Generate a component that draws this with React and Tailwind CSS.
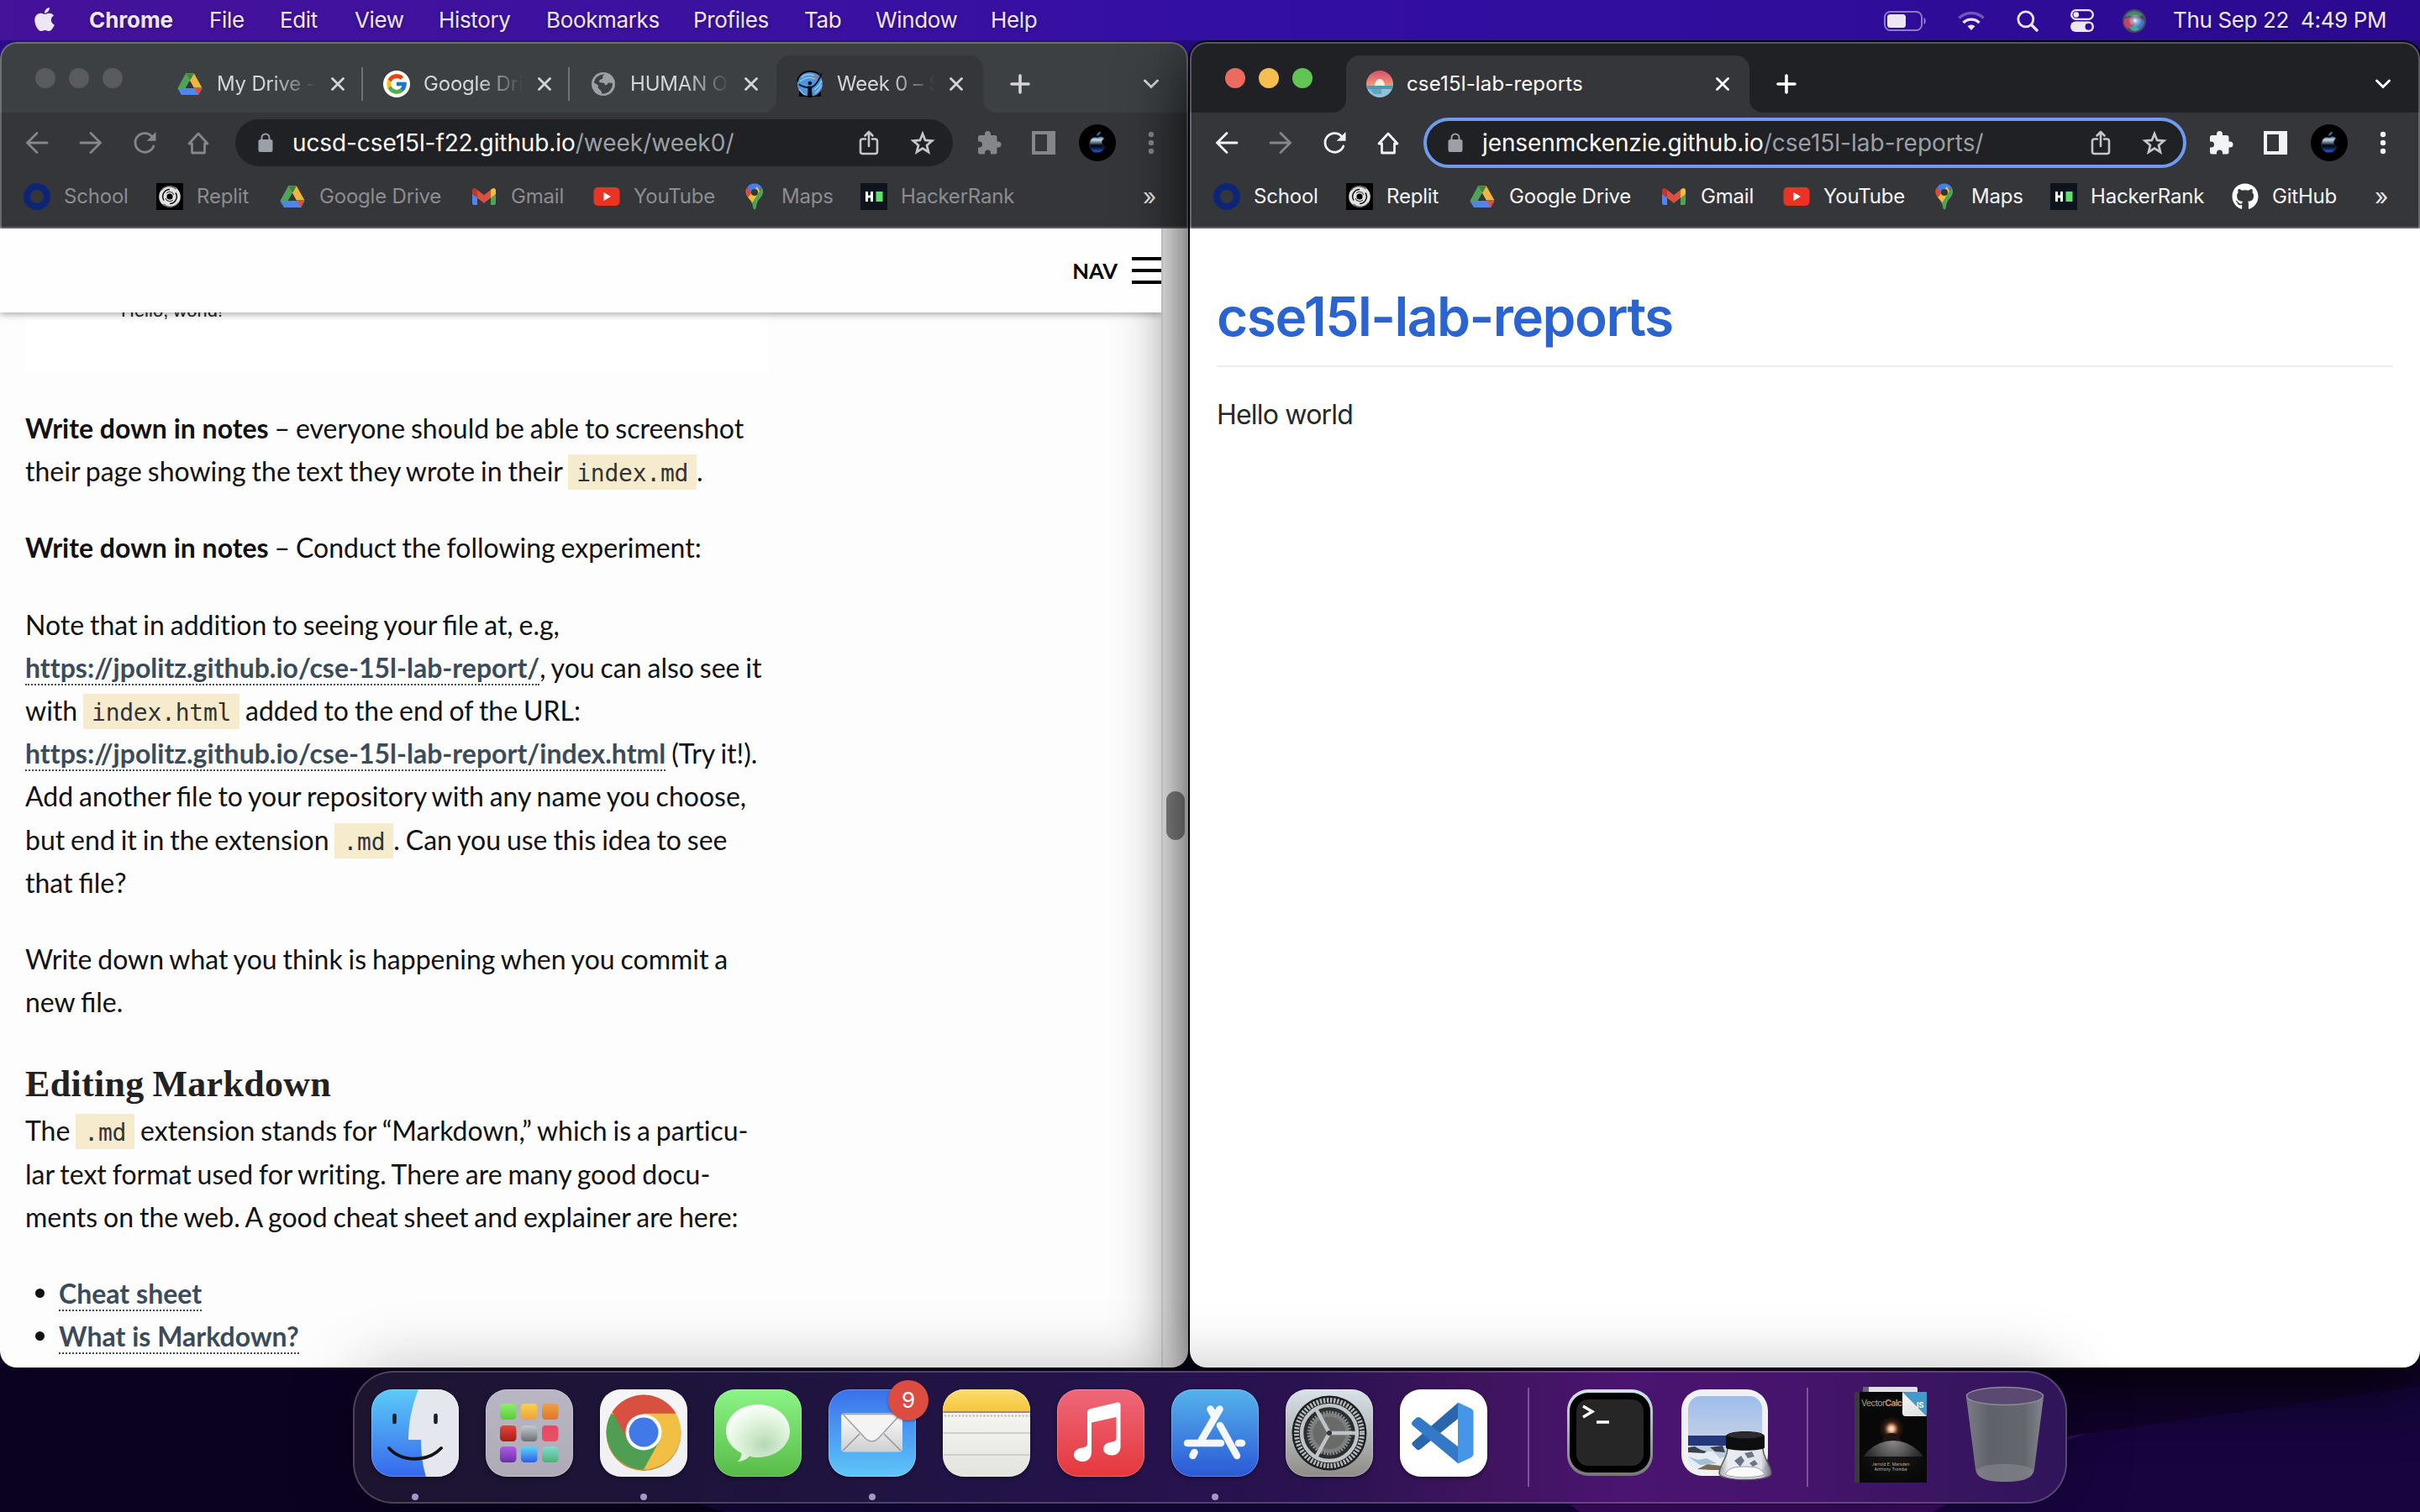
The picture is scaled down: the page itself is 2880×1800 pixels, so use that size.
import React from "react";
import { FaApple, FaGithub } from "react-icons/fa";
import { FcGoogle } from "react-icons/fc";

/* ---------- small glyphs ---------- */

const Drive = () => (
  <svg className="size-[30px]" viewBox="0 0 30 30">
    <path d="M10 2.500h10L5 28 0.500 20z" fill="#4fa357" />
    <path d="M10 2.500h10l9.500 17H19.600z" fill="#f1b43f" />
    <path d="M10 2.500h10L15 11z" fill="#3c8443" />
    <path d="M0.500 20l4.700 8h20l4.300-8z" fill="#4f86ec" />
    <path d="M20 20h9.500l-4.400 8z" fill="#d9503f" />
    <path d="M15 11l5 9H10z" fill="#35363a" />
  </svg>
);

const Gmail = () => (
  <svg className="size-[30px]" viewBox="0 0 30 30">
    <path d="M1 9h6v16H3a2 2 0 0 1-2-2z" fill="#4f86ec" />
    <path d="M23 9h6v14a2 2 0 0 1-2 2h-4z" fill="#4fa357" />
    <path d="M23 7l2-1.600A2.600 2.600 0 0 1 29 7.600V12l-6 4.500z" fill="#f6bd3b" />
    <path d="M7 7L5 5.400A2.600 2.600 0 0 0 1 7.600V12l6 4.500z" fill="#b9392d" />
    <path d="M7 7l8 6.300L23 7v9.500l-8 6.200-8-6.200z" fill="#dd5144" />
  </svg>
);

const YouTube = () => (
  <svg className="w-[32px] h-[24px]" viewBox="0 0 32 24">
    <rect x="0.500" y="1" width="31" height="22" rx="5" fill="#e93323" />
    <path d="M12.500 7l8.500 5-8.500 5z" fill="#fff" />
  </svg>
);

const Pin = () => (
  <svg className="size-[32px]" viewBox="0 0 32 32">
    <path d="M7 5.500C9 2 12 .5 16 .5s7 2 8.500 4.500L16 15z" fill="#4280ef" />
    <path d="M7 5.500L13 11l-5 6C5 13 4 9 7 5.500z" fill="#dd4b3e" />
    <path d="M8 17l11-13 4 7-10 13c-1-3-3-4.500-5-7z" fill="#f4bc3c" />
    <path d="M24.500 5c3 5 1.500 9-2 13-3 3.500-4 6-4.500 10-.5 4.500-3.500 4.500-4 0-.2-1.500-.5-3-1-4z" fill="#4ca553" />
    <circle cx="16" cy="11" r="4" fill="#35363a" />
  </svg>
);

const HackerRank = () => (
  <svg className="size-[32px]" viewBox="0 0 32 32">
    <rect width="32" height="32" fill="#0e141e" />
    <path d="M6 10h3v4.500h3V10h3v12h-3v-4.500H9V22H6z" fill="#fff" />
    <rect x="18.500" y="10" width="8" height="12" fill="#5ee06c" />
  </svg>
);

const Replit = () => (
  <svg className="size-[32px]" viewBox="0 0 32 32" fill="none">
    <rect width="32" height="32" fill="#000" />
    <circle cx="16" cy="16" r="12.800" fill="#e2e2e2" />
    <circle cx="16" cy="16" r="3.600" fill="#000" />
    <path d="M16 7.500a8.500 8.500 0 0 0-7 13M16 24.500a8.500 8.500 0 0 0 7-13" stroke="#111" strokeWidth="1.500" />
    <path d="M12 12c3-3 8-1.500 9 2M20 20c-3 3-8 1.500-9-2" stroke="#555" strokeWidth="1.200" />
    <path d="M5.500 9c4-6 13-7 18-2M26.500 23c-4 6-13 7-18 2" stroke="#5a5a5a" strokeWidth="1.300" />
  </svg>
);

const School = () => (
  <svg className="size-[32px]" viewBox="0 0 32 32">
    <circle cx="16" cy="16" r="12" fill="none" stroke="#0c2577" strokeWidth="8" />
  </svg>
);

const Globe = () => (
  <svg className="size-[28px]" viewBox="0 0 28 28">
    <circle cx="14" cy="14" r="14" fill="#9aa0a6" />
    <path d="M15.500 2.500c-2 1.500-3 2.500-2 4.500-1 2-4 1-4.500 3.500 0 2 2 2 4 2s3 1 3 3c2 0 3-1 3.500-2.500 2-1 4-.5 5.500.5A11.500 11.500 0 0 1 12 25.300c0-2 0-3-2-4.300-2-2-3-3-2-5.500L3 12.500A11.500 11.500 0 0 1 15.500 2.500z" fill="#3c4043" />
  </svg>
);

const Reach = () => (
  <svg className="size-[32px]" viewBox="0 0 32 32">
    <rect x="3" y="25" width="26" height="6" fill="#000" />
    <circle cx="16" cy="16" r="15" fill="#4a96dc" />
    <path d="M1 13C2 6 8 1 16 1c5 0 9 2 11 4" stroke="#000" strokeWidth="1.800" fill="none" />
    <path d="M6 8c5-4 10-4 15-2M4 13c6-5 12-6 18-3M21 23c4-3 7-7 9-11M22 27c4-3 6-6 7.500-10M3 22c2 3 4 5 7 7" stroke="#9cc9f2" strokeWidth="1.200" fill="none" />
    <circle cx="15.800" cy="15" r="2.300" fill="#06090f" />
    <path d="M3.500 17c4 2.500 7 3.200 10 3M18 20c5-2.500 8-6.500 11.500-16" stroke="#06090f" strokeWidth="1.800" fill="none" strokeLinecap="round" />
    <path d="M13 18.500h5.500l-.5 5 1 8.500h-6.500l1-8.500z" fill="#06090f" />
    <path d="M20 8l2-1M24 10l1-3M19 11l2 0" stroke="#d66a45" strokeWidth="1.400" />
  </svg>
);

const Sunset = () => (
  <svg className="size-[32px]" viewBox="0 0 32 32">
    <defs>
      <linearGradient id="sky" x1="0" y1="0" x2="0" y2="1">
        <stop offset="0" stopColor="#d94f6c" />
        <stop offset="1" stopColor="#ee9a7c" />
      </linearGradient>
      <clipPath id="sunc"><circle cx="16" cy="16" r="16" /></clipPath>
    </defs>
    <g clipPath="url(#sunc)">
      <rect width="32" height="18" fill="url(#sky)" />
      <path d="M10 18c0-4 3-8 6-8s6 4 6 8z" fill="#f6ece6" />
      <rect y="18" width="32" height="14" fill="#8fc3da" />
      <rect y="18" width="32" height="4" fill="#5795b3" />
      <path d="M4 22h14v6H9z" fill="#5fa6c6" />
    </g>
  </svg>
);

const Cross = () => (
  <svg className="size-[16px]" viewBox="0 0 16 16" stroke="currentColor" strokeWidth="2.800" strokeLinecap="round">
    <path d="M1.500 1.500l13 13M14.500 1.500l-13 13" />
  </svg>
);
const Plus = () => (
  <svg className="size-[24px]" viewBox="0 0 24 24" stroke="currentColor" strokeWidth="3.600" strokeLinecap="round">
    <path d="M12 2v20M2 12h20" />
  </svg>
);
const Chevron = () => (
  <svg className="w-[18px] h-[12px]" viewBox="0 0 18 12" stroke="currentColor" strokeWidth="3" fill="none" strokeLinecap="round">
    <path d="M1.500 2L9 9.500 16.500 2" />
  </svg>
);
const Back = () => (
  <svg className="size-[28px]" viewBox="0 0 28 28" stroke="currentColor" strokeWidth="2.800" fill="none" strokeLinecap="round">
    <path d="M26 14H3M14 2.500L2.500 14 14 25.500" />
  </svg>
);
const Forward = () => (
  <svg className="size-[28px]" viewBox="0 0 28 28" stroke="currentColor" strokeWidth="2.800" fill="none" strokeLinecap="round">
    <path d="M2 14h23M14 2.500L25.500 14 14 25.500" />
  </svg>
);
const Reload = () => (
  <svg className="size-[28px]" viewBox="0 0 28 28">
    <path d="M22.800 6.500A11.300 11.300 0 1 0 24.800 18" stroke="currentColor" strokeWidth="2.800" fill="none" strokeLinecap="round" />
    <path d="M27.500 1v10.800H16.700z" fill="currentColor" />
  </svg>
);
const Home = () => (
  <svg className="size-[28px]" viewBox="0 0 28 28" stroke="currentColor" strokeWidth="2.800" fill="none" strokeLinejoin="round">
    <path d="M14 3L3 15h3.500v11h15V15H25z" />
  </svg>
);
const Lock = () => (
  <svg className="w-[18px] h-[24px]" viewBox="0 0 18 24">
    <rect x="0.500" y="8" width="17" height="15" rx="2.500" fill="#9aa0a6" />
    <path d="M4.500 9V6a4.500 4.500 0 0 1 9 0v3" stroke="#9aa0a6" strokeWidth="2" fill="none" />
  </svg>
);
const Share = () => (
  <svg className="w-[24px] h-[30px]" viewBox="0 0 24 30" stroke="currentColor" strokeWidth="2.600" fill="none" strokeLinecap="round" strokeLinejoin="round">
    <path d="M8 10.500H4.500A2.500 2.500 0 0 0 2 13v12.500A2.500 2.500 0 0 0 4.500 28h15a2.500 2.500 0 0 0 2.500-2.500V13a2.500 2.500 0 0 0-2.500-2.500H16M12 19V2.500M7.500 6.500L12 2l4.500 4.500" />
  </svg>
);
const Star = () => (
  <svg className="size-[30px]" viewBox="0 0 30 30" stroke="currentColor" strokeWidth="2.700" fill="none" strokeLinejoin="miter">
    <path d="M15 4.200l3.100 7.700 8.200.7-6.300 5.300 2 8.100-7-4.400-7 4.400 2-8.100-6.300-5.300 8.200-.7z" />
  </svg>
);
const Puzzle = () => (
  <svg className="size-[30px]" viewBox="0 0 30 30" fill="currentColor">
    <path d="M12.500 1a3.500 3.500 0 0 1 3.500 3.500V6h5a2.500 2.500 0 0 1 2.500 2.500v5H25a3.500 3.500 0 0 1 0 7h-1.500V26a2.500 2.500 0 0 1-2.500 2.500h-5V27a3.500 3.500 0 0 0-7 0v1.500H3.500A2.500 2.500 0 0 1 1 26v-5.500h1.500a3.500 3.500 0 0 0 0-7H1v-5A2.500 2.500 0 0 1 3.500 6H9V4.500A3.500 3.500 0 0 1 12.500 1z" />
  </svg>
);
const SidePanel = () => (
  <svg className="size-[28px]" viewBox="0 0 28 28" fill="currentColor" fillRule="evenodd">
    <path d="M0 0h28v28H0zM4 4v20h14V4z" />
  </svg>
);
const Dots = () => (
  <svg className="w-[8px] h-[28px]" viewBox="0 0 8 28" fill="currentColor">
    <circle cx="4" cy="4" r="3.200" /><circle cx="4" cy="14" r="3.200" /><circle cx="4" cy="24" r="3.200" />
  </svg>
);
const Avatar = () => (
  <svg className="size-[44px]" viewBox="0 0 44 44">
    <defs>
      <linearGradient id="av" x1="0" y1="0" x2="0" y2="1">
        <stop offset="0" stopColor="#3878a8" />
        <stop offset="0.200" stopColor="#c9d2da" />
        <stop offset="0.400" stopColor="#5d6b78" />
        <stop offset="0.550" stopColor="#05080d" />
        <stop offset="0.700" stopColor="#071633" />
        <stop offset="1" stopColor="#2a5cf0" />
      </linearGradient>
    </defs>
    <circle cx="22" cy="22" r="22" fill="#000" />
    <path d="M22 16c3-2 6-1.500 8 .5-4 4-3 8 .5 10.500-2 5-5 7-8.500 6-4 1-7-1-8.500-5-1.500-5-.5-10 3-12 2-1 4-1 5.500 0z" fill="url(#av)" stroke="#143c63" strokeWidth="0.800" />
    <path d="M21 14c0-3 2-5 5-5.500 0 3-2 5-5 5.500z" fill="#2f6f9c" />
  </svg>
);

/* ---------- browser chrome ---------- */

const bookmarks = [
  { label: "School", icon: School, slot: "w-[158px]" },
  { label: "Replit", icon: Replit, slot: "w-[146px]" },
  { label: "Google Drive", icon: Drive, slot: "w-[228px]" },
  { label: "Gmail", icon: Gmail, slot: "w-[146px]" },
  { label: "YouTube", icon: YouTube, slot: "w-[176px]" },
  { label: "Maps", icon: Pin, slot: "w-[142px]" },
  { label: "HackerRank", icon: HackerRank, slot: "w-[216px]" },
  { label: "GitHub", icon: () => <FaGithub className="size-[32px] text-white" />, slot: "w-[140px]" },
];

const Cell = ({ children, className = "" }) => (
  <div className={`flex w-[64px] shrink-0 items-center justify-center ${className}`}>{children}</div>
);

function Tab({ icon, title, active, wide, divider, stripe, fade }) {
  return (
    <div className={`relative flex h-[68px] items-center ${wide ? "w-[480px]" : "w-[246px]"} ${active ? "rounded-t-[16px] bg-[#35363a]" : ""}`}>
      {active && (
        <>
          <span className="absolute bottom-0 -left-[16px] size-[16px] bg-[#35363a]">
            <span className={`block size-full rounded-br-[16px] ${stripe}`} />
          </span>
          <span className="absolute bottom-0 -right-[16px] size-[16px] bg-[#35363a]">
            <span className={`block size-full rounded-bl-[16px] ${stripe}`} />
          </span>
        </>
      )}
      <div className="ml-[24px] flex w-[32px] shrink-0 justify-center">{icon}</div>
      <div className={`ml-[16px] min-w-0 flex-1 overflow-hidden whitespace-nowrap text-[24px] leading-[34px] ${fade ? "tracking-[-0.200px] [mask-image:linear-gradient(to_right,black_55%,transparent_100%)]" : "tracking-[0.150px]"}`}>
        {title}
      </div>
      <div className={`ml-[16px] flex w-[18px] shrink-0 justify-center ${active ? "mr-[23px]" : "mr-[21px]"}`}>
        <Cross />
      </div>
      {divider && <span className="absolute right-0 top-[14px] h-[40px] w-[2px] bg-[#6f7276]" />}
    </div>
  );
}

function BrowserWindow({ focused, tabs, host, path, marks, children, className }) {
  const strip = focused ? "bg-[#202124]" : "bg-[#3c4043]";
  return (
    <section className={`relative flex h-[1578px] flex-col overflow-hidden rounded-[20px] ${className}`}>
      <div className={`flex h-[84px] shrink-0 items-end ${strip} ${focused ? "text-white" : "text-[#d4d5d7]"}`}>
        <div className="flex h-[82px] w-[186px] shrink-0 gap-[16px] pt-[29px] pl-[42px]">
          <span className={`size-[24px] rounded-full ${focused ? "bg-[#ed6a5f]" : "bg-[#5a5b5f]"}`} />
          <span className={`size-[24px] rounded-full ${focused ? "bg-[#f5bf4f]" : "bg-[#5a5b5f]"}`} />
          <span className={`size-[24px] rounded-full ${focused ? "bg-[#61c554]" : "bg-[#5a5b5f]"}`} />
        </div>
        {tabs.map((t) => (
          <Tab key={t.title} {...t} stripe={strip} />
        ))}
        <div className="ml-[32px] flex h-[68px] items-center"><Plus /></div>
        <div className="mr-[35px] ml-auto flex h-[68px] items-center"><Chevron /></div>
      </div>

      <div className={`flex h-[72px] shrink-0 items-center bg-[#35363a] px-[12px] ${focused ? "text-[#f1f3f4]" : "text-[#85868a]"}`}>
        <Cell><Back /></Cell>
        <Cell className={focused ? "text-[#85868a]" : ""}><Forward /></Cell>
        <Cell><Reload /></Cell>
        <Cell><Home /></Cell>
        <div className={`mx-[12px] flex h-[56px] flex-1 items-center rounded-full bg-[#202124] ${focused ? "outline-[4px] -outline-offset-[2px] outline-[#6f9bee]" : ""}`}>
          <div className="ml-[27px]"><Lock /></div>
          <div className="ml-[23px] flex-1 whitespace-nowrap text-[28px] leading-[40px] text-[#9aa0a6]">
            <span className="tracking-[-0.100px] text-white">{host}</span>{path}
          </div>
          <Cell className="text-[#c5c6c8]"><Share /></Cell>
          <Cell className="mr-[4px] text-[#c5c6c8]"><Star /></Cell>
        </div>
        <Cell><Puzzle /></Cell>
        <Cell><SidePanel /></Cell>
        <Cell><Avatar /></Cell>
        <Cell><Dots /></Cell>
      </div>

      <div className={`flex h-[66px] shrink-0 items-center border-b-2 border-[#5f5f63] bg-[#35363a] pb-[8px] pl-[28px] text-[24px] tracking-[-0.200px] ${focused ? "text-[#f4f5f6]" : "text-[#8b8d90]"}`}>
        {bookmarks.slice(0, marks).map((b) => (
          <div key={b.label} className={`flex shrink-0 items-center gap-[16px] whitespace-nowrap ${b.slot}`}>
            <span className="flex w-[32px] shrink-0 justify-center"><b.icon /></span>
            {b.label}
          </div>
        ))}
        <span className={`ml-auto text-[28px] leading-[32px] text-[#e4e5e7] ${focused ? "mr-[38px]" : "mr-[38px]"}`}>»</span>
      </div>

      <div className="flex min-h-0 flex-1">{children}</div>
      <span className="pointer-events-none absolute inset-x-0 top-0 h-[222px] rounded-t-[20px] border-x-2 border-t-2 border-white/25" />
    </section>
  );
}

/* ---------- pages ---------- */

const Code = ({ children }) => (
  <code className="bg-[#f7ebce] px-[10px] pt-[6px] pb-[3px] font-['DejaVu_Sans_Mono',monospace] text-[28px] leading-none tracking-[-0.250px] text-[#333]">{children}</code>
);
const Link = ({ children }) => (
  <a className="border-b-2 border-dotted border-[#3a4c5c] font-bold tracking-[0.010px] text-[#3a4c5c]">{children}</a>
);
const Lig = ({ children }) => <span className="[font-variant-ligatures:normal]">{children}</span>;
const Bullet = ({ children }) => (
  <li className="flex items-center">
    <span className="mr-[17px] ml-[12px] size-[11px] rounded-full bg-[#111]" />
    <span><Link>{children}</Link></span>
  </li>
);

function CoursePage() {
  return (
    <>
      <div className="relative h-full w-[1382px] overflow-hidden bg-[#fdfdfd] font-['Lato',sans-serif] text-[32px] leading-[51.200px] text-[#111]">
        <header className="relative z-10 flex h-[100px] items-center justify-end bg-[#fefefe] text-black shadow-[0_2px_8px_rgba(0,0,0,0.35)]">
          <span className="mt-[2px] mr-[17px] text-[25.600px] font-bold">NAV</span>
          <span className="flex w-[35px] flex-col gap-[10px]">
            <i className="h-[4px] bg-black" />
            <i className="h-[4px] bg-black" />
            <i className="h-[4px] bg-black" />
          </span>
        </header>
        <div className="ml-[30px] flex h-[72px] w-[884px] bg-white">
          <span className="-mt-[14px] ml-[114px] font-['Liberation_Sans',sans-serif] text-[22px] leading-[24px] text-[#222]">Hello, world!</span>
        </div>
        <article className="flex flex-col gap-[40px] pt-[40px] pl-[30px] whitespace-nowrap [font-variant-ligatures:none] [word-spacing:-1.300px]">
          <p>
            <b className="[word-spacing:0px]">Write down in notes</b> – everyone should be able to screenshot<br />
            their page showing the text they wrote in their <Code>index.md</Code>.
          </p>
          <p><b className="[word-spacing:0px]">Write down in notes</b> – Conduct the following experiment:</p>
          <p>
            Note that in addition to seeing your <Lig>file</Lig> at, e.g,<br />
            <Link>https://jpolitz.github.io/cse-15l-lab-report/</Link>, you can also see it<br />
            with <Code>index.html</Code> added to the end of the URL:<br />
            <Link>https://jpolitz.github.io/cse-15l-lab-report/index.html</Link> (Try it!).<br />
            Add another <Lig>file</Lig> to your repository with any name you choose,<br />
            but end it in the extension <Code>.md</Code>. Can you use this idea to see<br />
            that <Lig>file</Lig>?
          </p>
          <p>
            Write down what you think is happening when you commit a<br />
            new <Lig>file</Lig>.
          </p>
          <div>
            <h3 className="h-[62px] pt-[2px] font-['Liberation_Serif',serif] text-[44px] leading-[61px] font-bold tracking-[0.300px] text-[#222]">Editing Markdown</h3>
            <p>
              The <Code>.md</Code> extension stands for “Markdown,” which is a particu-<br />
              lar text format used for writing. There are many good docu-<br />
              ments on the web. A good cheat sheet and explainer are here:
            </p>
          </div>
          <ul className="[word-spacing:0px]">
            <Bullet>Cheat sheet</Bullet>
            <Bullet>What is Markdown?</Bullet>
          </ul>
        </article>
      </div>
      <div className="flex h-full flex-1 justify-center border-l-2 border-[#e4e4e4] bg-[#fafafa]">
        <span className="mt-[670px] h-[58px] w-[22px] rounded-full bg-[#8a8a8a]" />
      </div>
    </>
  );
}

function ReportPage() {
  return (
    <div className="h-full flex-1 bg-white px-[32px] pt-[68px] text-[#24292e]">
      <h1 className="h-[97px] border-b-2 border-[#eaecef] text-[64px] leading-[74px] font-semibold tracking-[-1.500px] text-[#2a64d0]">cse15l-lab-reports</h1>
      <p className="mt-[33px] text-[32px] leading-[48px] tracking-[-0.800px]">Hello world</p>
    </div>
  );
}

/* ---------- menu bar ---------- */

const menu = [
  ["File", "w-[84px]"],
  ["Edit", "w-[89px]"],
  ["View", "w-[100px]"],
  ["History", "w-[128px]"],
  ["Bookmarks", "w-[175px]"],
  ["Profiles", "w-[132px]"],
  ["Tab", "w-[85px]"],
  ["Window", "w-[137px]"],
  ["Help", "w-[80px]"],
];

function MenuBar() {
  return (
    <header className="relative z-20 flex h-[48px] shrink-0 items-center bg-linear-to-r from-[#45129a] via-[#340fa4] to-[#2b0a90] pb-[2px] text-[26px] tracking-[-0.350px] whitespace-nowrap text-[#ece6f6] [text-shadow:0_1px_4px_rgba(0,0,0,0.35)]">
      <FaApple className="ml-[37px] size-[32px] w-[32px]" />
      <span className="ml-[37px] w-[143px] font-bold tracking-[-0.100px]">Chrome</span>
      {menu.map(([label, w]) => (
        <span key={label} className={w}>{label}</span>
      ))}
      <div className="ml-auto flex items-center pt-[3px]">
        <svg className="w-[52px] h-[24px]" viewBox="0 0 52 24">
          <rect x="1" y="1" width="44" height="22" rx="6.500" fill="none" stroke="#ece6f6" strokeOpacity="0.500" strokeWidth="2" />
          <rect x="4" y="4" width="22" height="16" rx="3.500" fill="#ece6f6" />
          <path d="M47.500 8c3 1 3 7 0 8z" fill="#ece6f6" fillOpacity="0.500" />
        </svg>
        <svg className="ml-[36px] w-[32px] h-[24px]" viewBox="0 0 32 24" fill="none" stroke="#ece6f6" strokeWidth="3.400">
          <path d="M1.500 8.500a20.500 20.500 0 0 1 29 0" strokeOpacity="0.350" />
          <path d="M6.500 14a13.500 13.500 0 0 1 19 0" />
          <path d="M16 23l-4.500-4.800a6.500 6.500 0 0 1 9 0z" fill="#ece6f6" stroke="none" />
        </svg>
        <svg className="ml-[38px] size-[26px]" viewBox="0 0 26 26" fill="none" stroke="#ece6f6" strokeWidth="2.800" strokeLinecap="round">
          <circle cx="10.800" cy="10.800" r="9" /><path d="M17.500 17.500l6.500 6.500" strokeWidth="3.400" />
        </svg>
        <svg className="ml-[38px] w-[28px] h-[27px]" viewBox="0 0 28 27">
          <rect x="1.200" y="1.200" width="25.600" height="10.600" rx="5.300" fill="none" stroke="#ece6f6" strokeWidth="2.300" />
          <circle cx="6.800" cy="6.500" r="3.300" fill="#ece6f6" />
          <rect y="14.500" width="28" height="12.500" rx="6.250" fill="#ece6f6" />
          <circle cx="21.500" cy="20.800" r="4" fill="#2d0c98" />
        </svg>
        <svg className="ml-[34px] size-[28px]" viewBox="0 0 28 28">
          <defs>
            <radialGradient id="siri"><stop offset="0" stopColor="#fff" /><stop offset="0.500" stopColor="#b9c3e0" stopOpacity="0.600" /><stop offset="1" stopColor="#fff" stopOpacity="0" /></radialGradient>
          </defs>
          <circle cx="14" cy="14" r="14" fill="#4b4664" />
          <path d="M3 9C7 1 18 0 24 7c-4 3-12 0-21 2z" fill="#41886b" />
          <path d="M2 12c6-4 11-1 11 3s-4 9-8 7c-3-2-4-6-3-10z" fill="#c04467" />
          <path d="M14 15c4-6 11-4 12 0-1 6-5 10-9 10s-4-5-3-10z" fill="#3e76c4" />
          <path d="M8 22c4-3 8-3 12 2-4 3-9 3-12-2z" fill="#45a59c" />
          <circle cx="15" cy="13.500" r="8" fill="url(#siri)" />
        </svg>
        <span className="-mt-[3px] ml-[32px] w-[294px] whitespace-pre">Thu Sep 22  4:49 PM</span>
      </div>
    </header>
  );
}

/* ---------- dock ---------- */

const Grad = ({ id, from, to }) => (
  <linearGradient id={id} x1="0" y1="0" x2="0" y2="1">
    <stop offset="0" stopColor={from} />
    <stop offset="1" stopColor={to} />
  </linearGradient>
);

function AppIcon({ id, from, to, children, running, badge }) {
  return (
    <div className="relative h-[104px] w-[104px] shrink-0">
      <svg className="size-[104px] drop-shadow-[0_2px_2px_rgba(0,0,0,0.4)]" viewBox="0 0 104 104">
        <defs>
          <Grad id={id} from={from} to={to} />
          <clipPath id={id + "-clip"}><rect width="104" height="104" rx="25" /></clipPath>
        </defs>
        <g clipPath={`url(#${id}-clip)`}>
          <rect width="104" height="104" fill={`url(#${id})`} />
          {children}
        </g>
        <rect x="0.500" y="0.500" width="103" height="103" rx="24.500" fill="none" stroke="#fff" strokeOpacity="0.250" />
      </svg>
      {running && <span className="absolute top-[124px] left-[48px] size-[8px] rounded-full bg-[#a796c4]" />}
      {badge && (
        <span className="absolute -top-[11px] left-[71px] flex size-[48px] items-center justify-center rounded-full bg-[#dd4c40] text-[26px] leading-none text-white shadow-[0_1px_3px_rgba(0,0,0,0.4)]">{badge}</span>
      )}
    </div>
  );
}

const tiles = [
  [17, 17, "#8ff06a", "#5dc93c"], [42, 17, "#f8d34c", "#eda23a"], [67, 17, "#f0a23c", "#de7433"],
  [17, 43, "#e4453a", "#a71d14"], [42, 43, "#c3ccd3", "#6c7074"], [67, 43, "#ea4668", "#e45562"],
  [17, 68, "#b05be4", "#6c2fa8"], [42, 68, "#5fd3fb", "#2b5fe6"], [67, 68, "#7fdcd0", "#4eb178"],
];

/* gear spokes, drawn over the two toothed rings */
const GearSpokes = () => (
  <g stroke="#bfc4c8" strokeWidth="4.500" strokeLinecap="round">
    <path d="M52 52h31M52 52L37 25M52 52L37 79" />
  </g>
);

function Dock() {
  return (
    <nav className="relative isolate z-30 mx-auto mt-[4px] flex h-[158px] w-[2040px] shrink-0 gap-[32px] rounded-[48px] border-2 border-white/20 bg-[linear-gradient(to_right,#1d1430_0%,#1e143a_18%,#231349_40%,#2a1250_56%,#3f145e_66%,#4a1470_74%,#46146c_84%,#391560_93%,#2f155a_100%)] bg-origin-border pt-[20px] pl-[20px] shadow-[0_0_80px_rgba(0,0,0,0.26),0_0_0_1px_rgba(0,0,0,0.5)]">
      <AppIcon id="finder" from="#5ccbf8" to="#3667ee" running>
        <path d="M56 0C48 20 44 40 44 60h15c0 16 2 32 6 44h39V0z" fill="#e4e8ee" />
        <path d="M27.500 31v8M76.500 31v8" stroke="#1c1c20" strokeWidth="4.600" strokeLinecap="round" />
        <path d="M21 70c15 17 46 17 62 0" fill="none" stroke="#141416" strokeWidth="3.800" strokeLinecap="round" />
      </AppIcon>

      <AppIcon id="launch" from="#bab7c4" to="#aeaab8">
        {tiles.map(([x, y, a, b], i) => (
          <g key={i}>
            <defs><Grad id={"tile" + i} from={a} to={b} /></defs>
            <rect x={x} y={y} width="19.500" height="19" rx="4.500" fill={`url(#tile${i})`} />
          </g>
        ))}
      </AppIcon>

      <AppIcon id="chrome" from="#f6f6f9" to="#efeff3" running>
        <circle cx="52" cy="52.500" r="44.500" fill="#c98d2f" />
        <circle cx="52" cy="51" r="44.500" fill="#f2bf45" />
        <path d="M52 51L13.500 28.750A44.500 44.500 0 0 0 52 95.500L71 61z" fill="#4f9e54" />
        <path d="M52 51L33 60 14.500 27A44.500 44.500 0 0 1 90.500 28.750H52z" fill="#d85040" />
        <circle cx="52" cy="51" r="21.500" fill="#fff" />
        <circle cx="52" cy="51" r="17.500" fill="#4179e8" />
      </AppIcon>

      <AppIcon id="messages" from="#8bf587" to="#57bb47">
        <defs>
          <radialGradient id="bubble" cx="0.600" cy="0.700" r="0.750"><stop offset="0" stopColor="#b7d9b4" /><stop offset="0.600" stopColor="#e3f6e0" /><stop offset="1" stopColor="#fff" /></radialGradient>
        </defs>
        <path d="M52 18c21 0 38 14 38 31.500S73 81 52 81c-4 0-7-.5-10-1.500-4 4-8 6-14 6.500 3-3 4.500-6 4.500-10C21 70 14 60.500 14 49.500 14 32 31 18 52 18z" fill="url(#bubble)" />
      </AppIcon>

      <AppIcon id="mail" from="#3a70ec" to="#5fc6f8" running badge="9">
        <defs><Grad id="env" from="#fdfdfd" to="#cfcfd2" /></defs>
        <rect x="15" y="28.500" width="73" height="46" rx="4" fill="url(#env)" />
        <path d="M17 73l20-20M86 73L66 53" stroke="#97979b" strokeWidth="1.600" />
        <path d="M17 29.500l27 29q7.500 7 15 0l27-29z" fill="#f4f4f5" stroke="#a0a0a4" strokeWidth="1.500" />
      </AppIcon>

      <AppIcon id="notes" from="#fafaf8" to="#e4e4de">
        <defs><Grad id="pad" from="#fadc70" to="#f6c63c" /></defs>
        <rect width="104" height="26" fill="url(#pad)" />
        <path d="M0 27h104" stroke="#9d8a73" strokeWidth="2" />
        <path d="M2 31.500h102" stroke="#b9b9b4" strokeWidth="2.200" strokeDasharray="2.200 2" />
        <path d="M0 52h104M0 78h104" stroke="#cfcfcd" strokeWidth="1.800" />
      </AppIcon>

      <AppIcon id="music" from="#ee687a" to="#e5373c">
        <path d="M36 28c0-3 1-4 4-5l31-7.300c3-.6 4.500.3 4.500 3V68c0 6-4 10.500-10 10.500S55 75 55 71s3-7 8-8c5-1 7.500-1.500 7.500-5V33L41 39.500V75c0 6-4 11-10.500 11S20 82 20 78s3-7 7.500-8c6-1 8.500-2 8.500-5z" fill="#fff" />
      </AppIcon>

      <AppIcon id="store" from="#55b3ec" to="#2a58d6" running>
        <g stroke="#f4f8fc" strokeWidth="8.500" strokeLinecap="round" fill="none">
          <path d="M46.500 23.500L50 30" />
          <path d="M57.500 23.500L36 60" />
          <path d="M19 64h40M80 64h4" />
          <path d="M58 43l20 36" />
          <path d="M27.500 75l-2 4" />
        </g>
      </AppIcon>

      <AppIcon id="prefs" from="#d9e3ea" to="#8e8c88">
        <circle cx="52" cy="52" r="44.500" fill="#1e2021" />
        <circle cx="52" cy="52" r="39" fill="none" stroke="#b4b9bc" strokeWidth="6" strokeDasharray="2.400 1.700" />
        <circle cx="52" cy="52" r="33" fill="#2c2e2f" stroke="#bfc4c8" strokeWidth="4.500" />
        <circle cx="52" cy="52" r="24" fill="#6a6b69" stroke="#8b8e8f" strokeWidth="5" strokeDasharray="2 1.500" />
        <circle cx="52" cy="52" r="21" fill="none" stroke="#7e8182" strokeWidth="3" />
        <GearSpokes />
        <circle cx="52" cy="52" r="3" fill="#33363a" />
      </AppIcon>

      <AppIcon id="code" from="#ffffff" to="#ffffff">
        <path d="M69 16L15 63q-1.500 2 0 3.500l5 5q2 1 4 0L69 35z" fill="#2a66ac" />
        <path d="M15 38l5-4.500q2-1 4 0L69 68v20L15 43q-2-2.500 0-5z" fill="#3479c8" />
        <path d="M69 15.500l16 7.500q2.500 1.300 2.500 4v50q0 2.500-2.500 4L69 88.500z" fill="#4596e6" />
      </AppIcon>

      <span className="mt-[-2px] ml-[16px] h-[118px] w-[2px] shrink-0 bg-[#8150a3]" />

      <svg className="ml-[12px] size-[104px] shrink-0" viewBox="0 0 104 104">
        <defs><Grad id="term" from="#d3e4ee" to="#77757c" /></defs>
        <rect x="1" y="0" width="102" height="103" rx="25" fill="url(#term)" />
        <rect x="4" y="4" width="96" height="95" rx="22" fill="#000" />
        <rect x="12" y="12" width="80" height="79" rx="14" fill="#262626" />
        <path d="M20 20l11 6.500-11 6.500M36 39h15" fill="none" stroke="#fff" strokeWidth="3.300" />
      </svg>

      <svg className="size-[104px] shrink-0 overflow-visible" viewBox="0 0 104 104">
        <defs>
          <Grad id="psky" from="#9dbdec" to="#c3cfe6" />
          <linearGradient id="jar" x1="0" y1="0" x2="1" y2="0"><stop offset="0" stopColor="#9a9aa2" /><stop offset="0.180" stopColor="#eef0f4" /><stop offset="0.800" stopColor="#e3e6ec" /><stop offset="1" stopColor="#77777f" /></linearGradient>
          <clipPath id="photo"><rect x="9" y="8" width="88" height="88" rx="15" /></clipPath>
        </defs>
        <rect x="1" y="0" width="103" height="103" rx="25" fill="#f1f1f3" />
        <g clipPath="url(#photo)">
          <rect x="9" y="8" width="88" height="50" fill="url(#psky)" />
          <rect x="9" y="55" width="88" height="41" fill="#b9cfe0" />
          <rect x="9" y="55" width="88" height="12" fill="#23377a" />
          <path d="M9 67l10 2 6 5 14 0 8 8 10-2v16H9z" fill="#e6eef4" />
          <path d="M9 69l8-1 7 4 7 2-3 2-19-1zM35 69l15-2 3 8-12-1z" fill="#3d3f4a" />
          <path d="M20 95l12-6 16 2 6 6z" fill="#7c6a55" />
          <path d="M9 80l12 4 10-2 12 6-20 2z" fill="#a3bfd6" />
        </g>
        <path d="M56 70c0 12-10 20-10 30 0 10 62 10 62 0 0-10-10-18-10-30z" fill="url(#jar)" fillOpacity="0.920" stroke="#5c5c64" strokeWidth="1.500" />
        <path d="M53 101c4-8 12-9 24-9s18 1 23 9c-8 5-40 5-47 0z" fill="#fafafa" stroke="#9c9ca2" strokeWidth="1" />
        <path d="M64 85l8-6 4 6-5 7zM76 76l9-2 3 6-8 2zM82 88l6-4 4 5-6 3z" fill="#6f7484" />
        <path d="M54 56c0-8 46-8 46 0v13c0 5-46 5-46 0z" fill="#0e0e10" />
        <ellipse cx="77" cy="54.500" rx="21" ry="4" fill="#2c2c30" />
      </svg>

      <span className="mt-[-2px] ml-[14px] h-[118px] w-[2px] shrink-0 bg-[#8150a3]" />

      <div className="relative ml-[14px] h-[115px] w-[104px] shrink-0">
        <svg className="mt-[-4px] h-[115px] w-[104px]" viewBox="0 0 104 115">
          <defs>
            <radialGradient id="glow"><stop offset="0" stopColor="#fff" /><stop offset="0.250" stopColor="#e8a781" /><stop offset="0.600" stopColor="#5a2c14" stopOpacity="0.500" /><stop offset="1" stopColor="#5a2c14" stopOpacity="0" /></radialGradient>
            <radialGradient id="moon" cx="0.500" cy="0" r="0.600"><stop offset="0" stopColor="#8a8a8a" /><stop offset="0.600" stopColor="#333" /><stop offset="1" stopColor="#090909" /></radialGradient>
            <linearGradient id="fold" x1="0" y1="0" x2="1" y2="1"><stop offset="0" stopColor="#f6f6f6" /><stop offset="1" stopColor="#dcdcdc" /></linearGradient>
            <clipPath id="cover"><rect x="9" y="7" width="86" height="108" /></clipPath>
          </defs>
          <rect x="19" y="1" width="65" height="9" rx="2" fill="#e2e2e4" />
          <rect x="19" y="1" width="7" height="9" fill="#66666a" />
          <rect x="9" y="7" width="86" height="108" fill="#080808" />
          <g clipPath="url(#cover)">
            <circle cx="53" cy="51" r="15" fill="url(#glow)" />
            <circle cx="53" cy="67" r="11" fill="#1a1512" />
            <circle cx="55" cy="108" r="43" fill="url(#moon)" />
            <rect x="9" y="84" width="86" height="31" fill="#090909" fillOpacity="0.800" />
          </g>
          <rect x="9" y="7" width="6" height="108" fill="#3a3a3c" />
          <path d="M66 7h29v29z" fill="#439ac9" />
          <path d="M66 7l29 29H70q-4 0-4-4z" fill="url(#fold)" />
        </svg>
        <span className="absolute top-[10px] left-[17px] text-[10.500px] leading-[14px] tracking-[-0.700px] whitespace-nowrap text-[#a89e8e]">Vector<b className="text-[#c98a5c]">Calc</b></span>
        <span className="absolute top-[13px] left-[83px] text-[9px] leading-[12px] font-bold text-white">IS</span>
        <span className="absolute top-[86px] left-0 w-[104px] text-center text-[5px] leading-[6px] text-[#b9b09a]">Jerrold E. Marsden<br />Anthony Tromba</span>
      </div>

      <svg className="mt-[-4px] h-[115px] w-[104px] shrink-0" viewBox="0 0 104 115">
        <defs>
          <linearGradient id="can" x1="0" y1="0" x2="1" y2="0"><stop offset="0" stopColor="#7b7d86" /><stop offset="0.300" stopColor="#5f6269" /><stop offset="0.750" stopColor="#63666c" /><stop offset="1" stopColor="#84858f" /></linearGradient>
        </defs>
        <path d="M6 13l11 86c1 10 12 15 35 15s34-5 35-15l11-86z" fill="url(#can)" />
        <path d="M18 100c8-6 18-7 34-7s28 2 34 7c-1 10-12 14-34 14s-33-4-34-14z" fill="#8d8f96" fillOpacity="0.500" />
        <ellipse cx="52" cy="12" rx="45.500" ry="10.500" fill="#5a4a72" stroke="#8d869c" strokeWidth="1.500" />
      </svg>
    </nav>
  );
}

/* ---------- desktop ---------- */

const Wallpaper = () => (
  <svg className="absolute inset-0 h-full w-full" viewBox="0 0 2880 1800" preserveAspectRatio="none">
    <rect width="2880" height="1800" fill="#08021c" />
    <rect width="2880" height="400" fill="#2b0c8c" />
    <path d="M0 1600h500l120 60v140H0z" fill="#0a0220" />
    <path d="M800 1780l60 20h1100l-100-30z" fill="#130538" />
    <path d="M1800 1620h400l600 60-500 120H1880l-80-60z" fill="#3a0a5e" />
    <path d="M2440 1720l440-130v210H2300z" fill="#16053f" />
    <path d="M2400 1600h480v50l-420 60z" fill="#12032c" />
  </svg>
);

export default function App() {
  return (
    <div className="relative flex h-[1800px] w-[2880px] flex-col overflow-hidden bg-[#08021c] font-['Inter',sans-serif]">
      <Wallpaper />
      <MenuBar />
      <main className="relative mt-[2px] flex shrink-0 gap-[2px]">
        <BrowserWindow
          className="w-[1414px]"
          host="ucsd-cse15l-f22.github.io"
          path="/week/week0/"
          marks={7}
          tabs={[
            { title: "My Drive - G", icon: <Drive />, divider: true, fade: true },
            { title: "Google Drive", icon: <span className="flex size-[32px] items-center justify-center rounded-full bg-white"><FcGoogle className="size-[28px]" /></span>, divider: true, fade: true },
            { title: "HUMAN ORI", icon: <Globe />, fade: true },
            { title: "Week 0 – Se", icon: <Reach />, active: true, fade: true },
          ]}
        >
          <CoursePage />
        </BrowserWindow>
        <BrowserWindow
          className="w-[1464px] shadow-[0_20px_80px_rgba(0,0,0,0.9),0_0_0_2px_rgba(0,0,0,0.8)]"
          focused
          host="jensenmckenzie.github.io"
          path="/cse15l-lab-reports/"
          marks={8}
          tabs={[{ title: "cse15l-lab-reports", icon: <Sunset />, active: true, wide: true }]}
        >
          <ReportPage />
        </BrowserWindow>
      </main>
      <Dock />
    </div>
  );
}
